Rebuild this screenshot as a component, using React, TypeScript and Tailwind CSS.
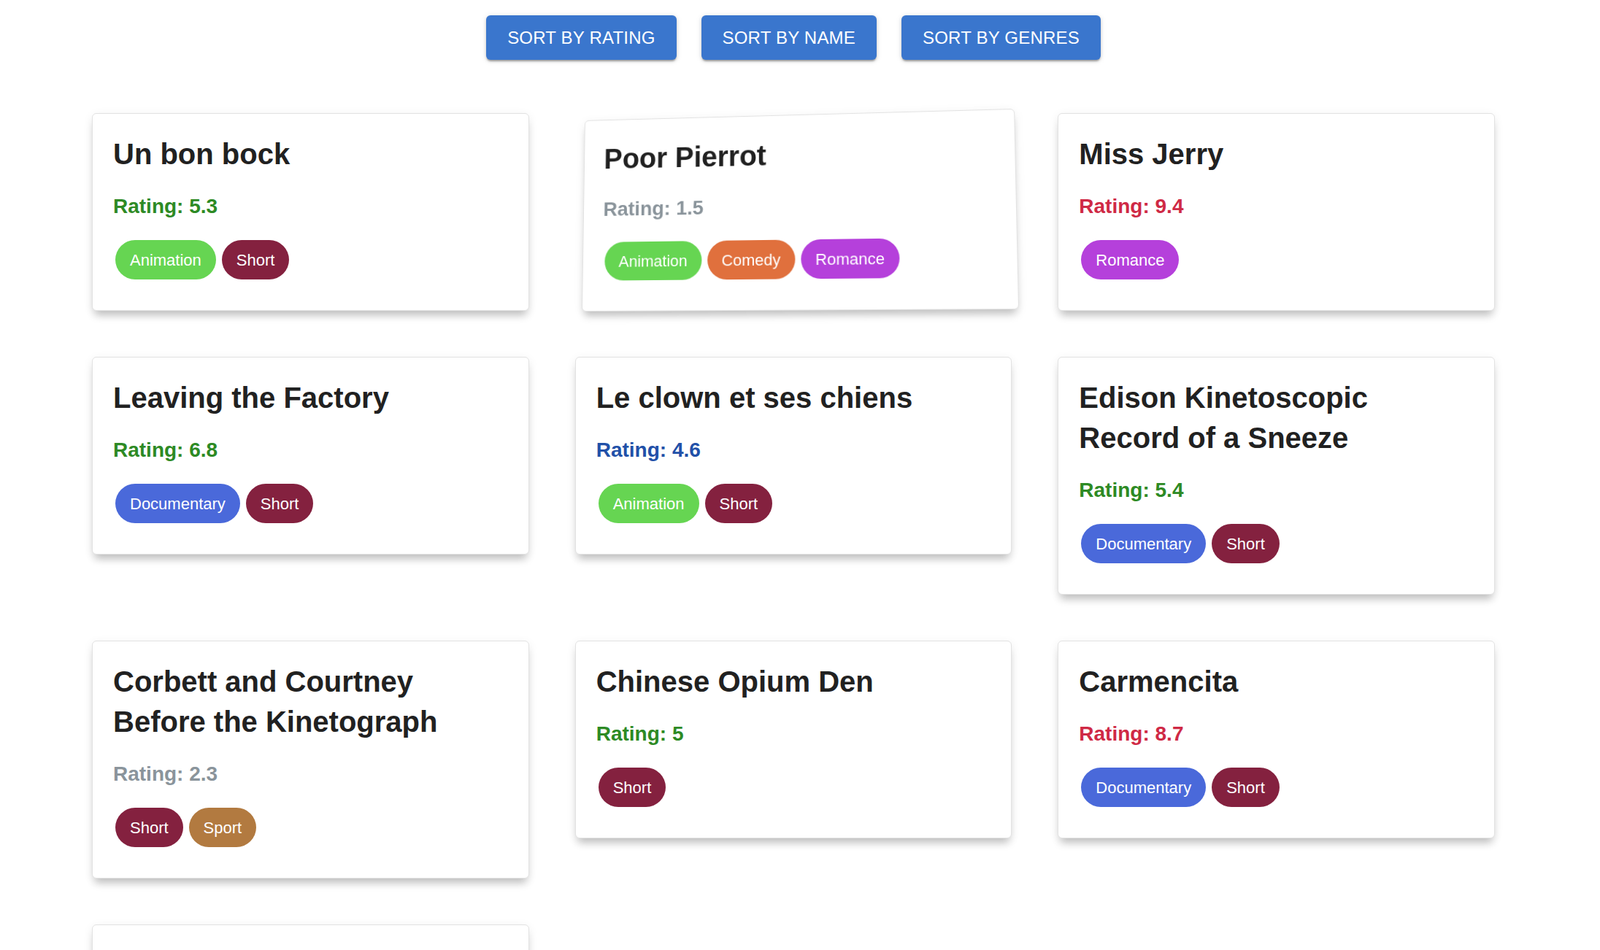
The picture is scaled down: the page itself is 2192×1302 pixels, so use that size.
type Movie = {
  title: string;
  rating: number;
  genres: string[];
};

const movies: Movie[] = [
  { title: "Un bon bock", rating: 5.3, genres: ["Animation", "Short"] },
  { title: "Poor Pierrot", rating: 1.5, genres: ["Animation", "Comedy", "Romance"] },
  { title: "Miss Jerry", rating: 9.4, genres: ["Romance"] },
  { title: "Leaving the Factory", rating: 6.8, genres: ["Documentary", "Short"] },
  { title: "Le clown et ses chiens", rating: 4.6, genres: ["Animation", "Short"] },
  { title: "Edison Kinetoscopic Record of a Sneeze", rating: 5.4, genres: ["Documentary", "Short"] },
  { title: "Corbett and Courtney Before the Kinetograph", rating: 2.3, genres: ["Short", "Sport"] },
  { title: "Chinese Opium Den", rating: 5, genres: ["Short"] },
  { title: "Carmencita", rating: 8.7, genres: ["Documentary", "Short"] },
  { title: "Blacksmith Scene", rating: 6.1, genres: ["Short"] },
];

const genreColors: Record<string, string> = {
  Animation: "bg-[#66d552]",
  Short: "bg-[#84213f]",
  Comedy: "bg-[#e0703d]",
  Romance: "bg-[#b540db]",
  Documentary: "bg-[#4a69da]",
  Sport: "bg-[#b27a40]",
};

// colour of the rating line depends on the score
function ratingColor(rating: number) {
  if (rating >= 8) return "text-[#cf2945]";
  if (rating >= 5) return "text-[#2d8a24]";
  if (rating >= 4) return "text-[#2150a8]";
  return "text-[#8a949b]";
}

function SortButton({ label }: { label: string }) {
  return (
    <button className="h-[61px] px-[29px] rounded-[6px] bg-[#3a76cd] text-white text-[24px] tracking-[0.2px] uppercase shadow-[0_3px_2px_-1px_rgba(0,0,0,0.25),0_2px_4px_rgba(0,0,0,0.14),0_1px_8px_rgba(0,0,0,0.1)]">
      {label}
    </button>
  );
}

function MovieCard({ movie, tilted }: { movie: Movie; tilted?: boolean }) {
  return (
    <div
      className={
        "bg-white border border-[#e2e2e2] rounded-[6px] px-[28px] pt-[28px] pb-[42px] shadow-[0_10px_12px_-4px_rgba(0,0,0,0.22),0_3px_14px_rgba(0,0,0,0.07)] " +
        (tilted
          ? "origin-top-left [transform:matrix3d(0.93556,-0.026323,0,-0.00007948,-0.015299,0.950461,0,-0.00006004,0,0,1,0,13,10,0,1)]"
          : "")
      }
    >
      <h2 className="text-[40px] leading-[55px] font-bold text-[#212121] mb-[23px]">{movie.title}</h2>
      <p className={"text-[28px] leading-[42px] font-bold mb-[25px] " + ratingColor(movie.rating)}>
        Rating: {movie.rating}
      </p>
      <div className="flex gap-[8px] pl-[3px]">
        {movie.genres.map((g) => (
          <span
            key={g}
            className={"h-[54px] px-[20px] rounded-full flex items-center text-white text-[22px] " + genreColors[g]}
          >
            {g}
          </span>
        ))}
      </div>
    </div>
  );
}

export default function App() {
  return (
    <div className="w-[2174px] min-h-screen bg-white font-['Liberation_Sans',Arial,sans-serif]">
      <div className="flex justify-center gap-[34px] pt-[21px]">
        <SortButton label="Sort by rating" />
        <SortButton label="Sort by name" />
        <SortButton label="Sort by genres" />
      </div>
      <div className="mx-auto w-[1922px] mt-[73px] grid grid-cols-3 gap-x-[63px] gap-y-[63px] items-start pb-16">
        {movies.map((m, i) => (
          <MovieCard key={m.title} movie={m} tilted={i === 1} />
        ))}
      </div>
    </div>
  );
}
